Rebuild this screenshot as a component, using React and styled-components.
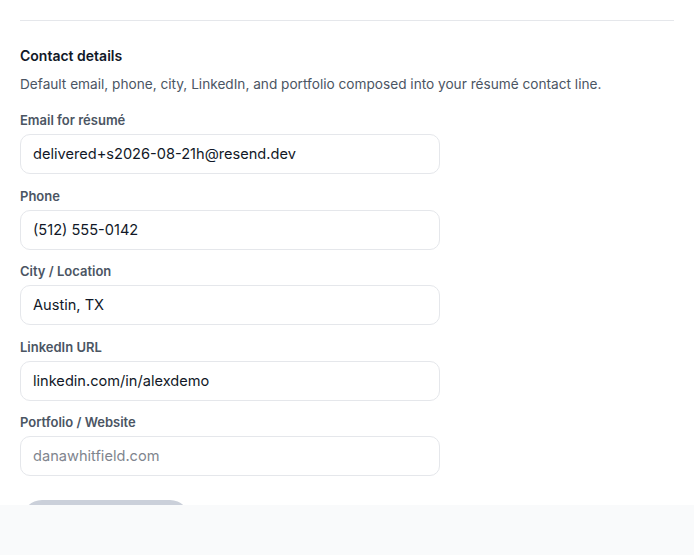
import React from "react";
import styled, { createGlobalStyle } from "styled-components";

const Global = createGlobalStyle`
  html, body { margin: 0; padding: 0; background: #f9fafb; }
  body { font-family: Inter, "Noto Sans", sans-serif; -webkit-font-smoothing: antialiased; }
  * { box-sizing: border-box; }
`;

const Page = styled.div`
  width: 694px;
  height: 555px;
  display: flex;
  flex-direction: column;
  background: #f9fafb;
`;

const Panel = styled.div`
  height: 505px;
  overflow: hidden;
  background: #ffffff;
  padding: 20px 20px 0 20px;
`;

const Divider = styled.hr`
  margin: 0;
  border: 0;
  border-top: 1px solid #e5e7eb;
  width: 654px;
`;

const Section = styled.section`
  padding-top: 26px;
  display: flex;
  flex-direction: column;
`;

const Title = styled.h3`
  margin: 0;
  font-size: 14px;
  line-height: 18px;
  font-weight: 600;
  color: #111827;
`;

const Desc = styled.p`
  margin: 10px 0 0;
  font-size: 13.65px;
  line-height: 18px;
  color: #4b5563;
`;

const Fields = styled.div`
  margin-top: 19px;
  display: flex;
  flex-direction: column;
  gap: 13.5px;
  width: 420px;
`;

const Field = styled.label`
  display: flex;
  flex-direction: column;
  gap: 5px;
`;

const Label = styled.span`
  font-size: 13px;
  line-height: 17px;
  font-weight: 600;
  color: #4b5563;
`;

const Input = styled.input`
  height: 40px;
  width: 100%;
  border: 1px solid #e5e7eb;
  border-radius: 10px;
  padding: 0 12px;
  font-family: inherit;
  font-size: 14.6px;
  color: #111827;
  background: #fff;
  outline: none;
  &::placeholder { color: #80858e; }
`;

const Button = styled.button`
  margin-top: 24px;
  width: 168px;
  height: 40px;
  border: 0;
  border-radius: 999px;
  background: #cbd0da;
  margin-left: 2px;
`;

const Footer = styled.div`
  flex: 1;
  background: #f9fafb;
`;

const fields = [
  { label: "Email for résumé", value: "delivered+s2026-08-21h@resend.dev" },
  { label: "Phone", value: "(512) 555-0142" },
  { label: "City / Location", value: "Austin, TX" },
  { label: "LinkedIn URL", value: "linkedin.com/in/alexdemo" },
  { label: "Portfolio / Website", value: "", placeholder: "danawhitfield.com" },
];

export default function App() {
  return (
    <>
      <Global />
      <Page>
        <Panel>
          <Divider />
          <Section>
            <Title>Contact details</Title>
            <Desc>Default email, phone, city, LinkedIn, and portfolio composed into your résumé contact line.</Desc>
            <Fields>
              {fields.map((f) => (
                <Field key={f.label}>
                  <Label>{f.label}</Label>
                  <Input defaultValue={f.value} placeholder={f.placeholder} readOnly />
                </Field>
              ))}
            </Fields>
            <Button disabled aria-label="Save contact details" />
          </Section>
        </Panel>
        <Footer />
      </Page>
    </>
  );
}
